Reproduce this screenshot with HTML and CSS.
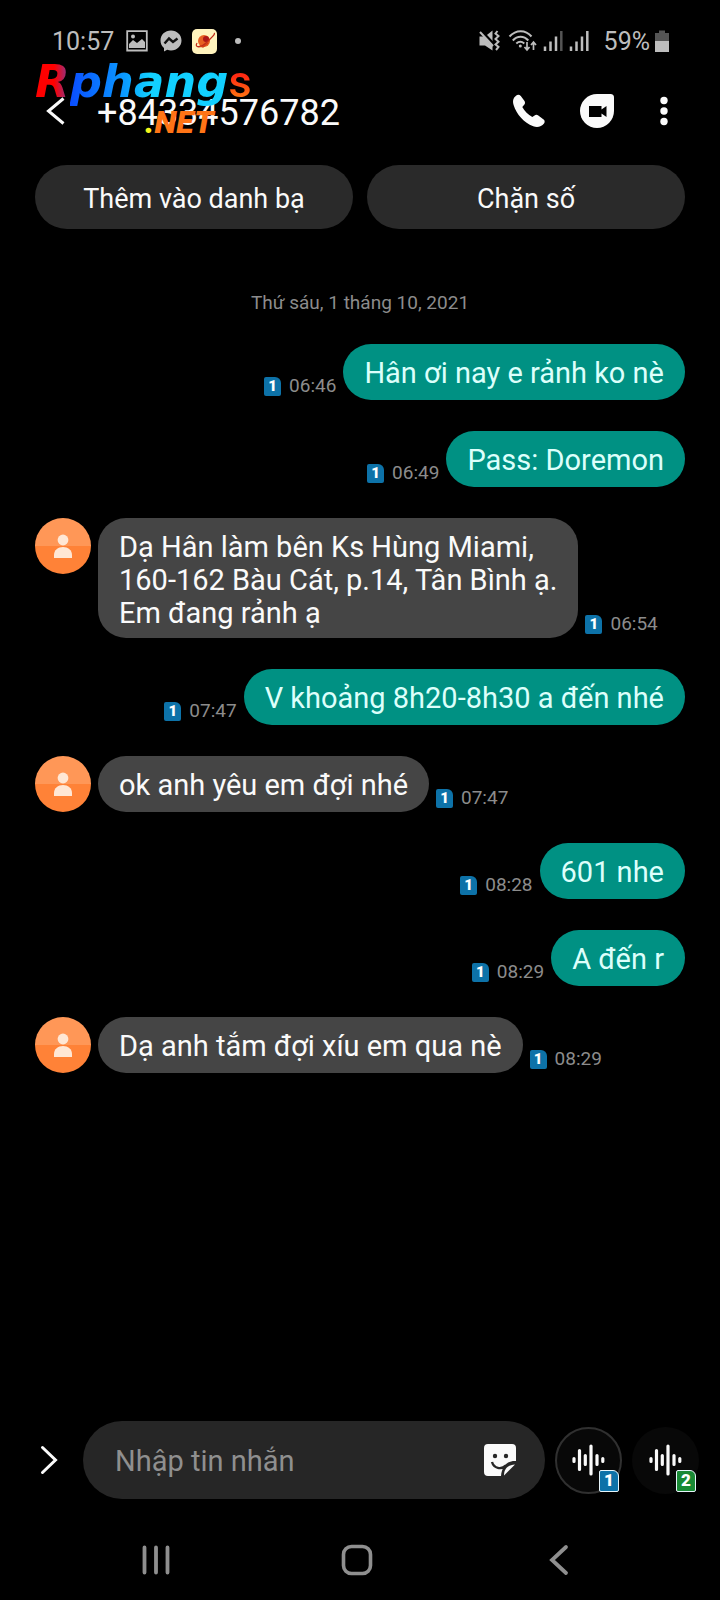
FILE: index.html
```html
<!DOCTYPE html>
<html lang="vi">
<head>
<meta charset="utf-8">
<meta name="viewport" content="width=device-width, initial-scale=1">
<title>+84334576782</title>
<link rel="stylesheet" href="styles.css">
</head>
<body>
<svg class="defs" aria-hidden="true">
  <symbol id="person" viewBox="0 0 56 56"><circle cx="28" cy="22" r="5.4"/><path d="M19 40v-3c0-5 4-8 9-8s9 3 9 8v3z"/></symbol>
  <symbol id="wave" viewBox="0 0 34 34"><path d="M2 15.500v3M7.500 7.500v19M13.300 12.500v9M19 3v28M25 12.500v9M30.800 15.500v3" fill="none" stroke="currentColor" stroke-width="3.200" stroke-linecap="round"/></symbol>
</svg>
<div class="screen">
  <div class="status">
    <span class="clock">10:57</span>
    <svg class="st-image" width="22" height="22" viewBox="0 0 22 22"><path d="M1.200 1.200h19.600v19.300H1.200z" fill="none" stroke="currentColor" stroke-width="1.800"/><circle cx="7" cy="6.500" r="2" fill="currentColor"/><path d="M3 18v-4l4-4 4 3 5-4 3 3v6z" fill="currentColor"/></svg>
    <svg class="st-messenger" width="22" height="22" viewBox="0 0 22 22"><path d="M11 .5C5 .5.500 4.800.500 10.500c0 3 1.300 5.600 3.500 7.500v3.500l3.200-1.700c1.200.4 2.500.6 3.800.6 6 0 10.500-4.300 10.500-9.900S17 .5 11 .5z" fill="currentColor"/><path d="M4.500 13.500 9 8.500l4 3.500 4.500-3.500" fill="none" stroke="#111" stroke-width="2.400"/></svg>
    <svg class="st-app" width="25" height="25" viewBox="0 0 25 25"><rect width="25" height="25" rx="5" fill="#fff3bd"/><circle cx="12" cy="12" r="6" fill="#e76022"/><circle cx="14" cy="10" r="3" fill="#ad1717"/><path d="M5 14c-3 5 4 5 9 0s10-9 8-10" fill="none" stroke="#c12c1a" stroke-width="1.300"/><path d="m8 17 3 1 5-4" fill="none" stroke="#d13c16" stroke-width="1.500"/></svg>
    <span class="st-dot"></span>
    <div class="status-right">
      <svg class="st-mute" width="22" height="22" viewBox="0 0 22 22"><path d="M.5 6.500H6L13.500.5v20L6 15.500H.5z" fill="currentColor"/><path d="M1 0l14 15" stroke="#000" stroke-width="3.500"/><path d="m1 2 13 14" stroke="currentColor" stroke-width="2"/><path d="m18.500 1-2 2.500 3 2.500-3 3 3 2.700-3 2.800 3 2.500-2.500 3" fill="none" stroke="currentColor" stroke-width="2"/></svg>
      <svg class="st-wifi" width="29" height="22" viewBox="0 0 29 22"><path d="M1.500 6.500c6.500-7 16-7 22 0M4.800 10.500c4.500-5 11-5 15.500 0M8.300 13.500c3-2.500 5-2.500 8 0" fill="none" stroke="currentColor" stroke-width="2"/><circle cx="12.300" cy="16" r="1.500" fill="currentColor"/><path d="M19 12v7.500M16.500 17l2.500 3 2.500-3M25.500 20v-7.500M23 15l2.500-3 2.500 3" fill="none" stroke="currentColor" stroke-width="1.700"/></svg>
      <svg class="st-signal" width="20" height="22" viewBox="0 0 20 22"><path d="M2 16.500V21M7.500 11.500V21M13 6.500V21" stroke="currentColor" stroke-width="2.500"/><path d="M18.300 1v20" stroke="#555" stroke-width="2.500"/></svg>
      <svg class="st-signal" width="20" height="22" viewBox="0 0 20 22"><path d="M2 16.500V21M7.500 11.500V21M13 6.500V21M18.300 1v20" stroke="currentColor" stroke-width="2.500"/></svg>
      <span class="percent">59%</span>
      <svg class="st-battery" width="16" height="23" viewBox="0 0 16 23"><path d="M5 .5h6V3h4v8H1V3h4z" fill="#555"/><path d="M1 11h14v11H1z" fill="currentColor"/></svg>
    </div>
  </div>

  <header class="header">
    <button class="icon-btn back" aria-label="Quay lại"><svg width="20" height="30" viewBox="0 0 20 30"><path d="M17.500 2.500 2.500 15l15 12.500" fill="none" stroke="currentColor" stroke-width="3"/></svg></button>
    <h1 class="number">+84334576782</h1>
    <div class="header-actions">
      <button class="icon-btn" aria-label="Gọi"><svg width="34" height="34" viewBox="0 0 34 34"><path d="M4 1.700C5.500.400 7.500.500 8.800 2l3.700 5c.8 1.300.7 2.800-.3 3.800l-1.900 2.100c2.300 4 5.800 7.700 10 10.100l2.300-1.600c1.100-.8 2.600-.8 3.700.1l5.300 4c1.300 1 1.400 2.700.4 4-2.500 3.200-6.500 4.400-10.800 2.800C12 28.500 4.500 20.500 1.600 11 .5 7 1 4 4 1.700z" fill="currentColor"/></svg></button>
      <button class="icon-btn" aria-label="Gọi video"><svg width="34" height="34" viewBox="0 0 34 34"><path d="M17 0h13.500Q34 0 34 3.500V17A17 17 0 1 1 17 0z" fill="currentColor"/><path d="M9 12h12.500v3.500L26.500 12v11l-5-3.500V23H9z" fill="#000"/></svg></button>
      <button class="icon-btn more" aria-label="Thêm"><svg width="8" height="30" viewBox="0 0 8 30"><circle cx="4" cy="4.500" r="3.700"/><circle cx="4" cy="15" r="3.700"/><circle cx="4" cy="25.500" r="3.700"/></svg></button>
    </div>
    <div class="brand"><span class="brand-r">R</span><span class="brand-main">phang</span><span class="brand-s">s</span><div class="brand-net"><span class="brand-dot">.</span>NET</div></div>
  </header>

  <div class="quick">
    <button class="quick-btn">Thêm vào danh bạ</button>
    <button class="quick-btn">Chặn số</button>
  </div>

  <main class="thread">
    <p class="date">Thứ sáu, 1 tháng 10, 2021</p>
    <div class="msg out"><p class="bubble">Hân ơi nay e rảnh ko nè</p><div class="meta"><span class="sim">1</span><time>06:46</time></div></div>
    <div class="msg out"><p class="bubble">Pass: Doremon</p><div class="meta"><span class="sim">1</span><time>06:49</time></div></div>
    <div class="msg in"><svg class="avatar"><use href="#person"/></svg><p class="bubble">Dạ Hân làm bên Ks Hùng Miami,<br>160-162 Bàu Cát, p.14, Tân Bình ạ.<br>Em đang rảnh ạ</p><div class="meta"><span class="sim">1</span><time>06:54</time></div></div>
    <div class="msg out"><p class="bubble">V khoảng 8h20-8h30 a đến nhé</p><div class="meta"><span class="sim">1</span><time>07:47</time></div></div>
    <div class="msg in"><svg class="avatar"><use href="#person"/></svg><p class="bubble">ok anh yêu em đợi nhé</p><div class="meta"><span class="sim">1</span><time>07:47</time></div></div>
    <div class="msg out"><p class="bubble">601 nhe</p><div class="meta"><span class="sim">1</span><time>08:28</time></div></div>
    <div class="msg out"><p class="bubble">A đến r</p><div class="meta"><span class="sim">1</span><time>08:29</time></div></div>
    <div class="msg in"><svg class="avatar"><use href="#person"/></svg><p class="bubble">Dạ anh tắm đợi xíu em qua nè</p><div class="meta"><span class="sim">1</span><time>08:29</time></div></div>
  </main>

  <form class="composer">
    <button type="button" class="icon-btn expand" aria-label="Mở rộng"><svg width="18" height="30" viewBox="0 0 18 30"><path d="M2.500 2.500 15.500 15l-13 12.500" fill="none" stroke="currentColor" stroke-width="3" stroke-linecap="round"/></svg></button>
    <div class="field">
      <input class="text" type="text" placeholder="Nhập tin nhắn" aria-label="Nhập tin nhắn">
      <button type="button" class="icon-btn" aria-label="Nhãn dán"><svg width="34" height="34" viewBox="0 0 34 34"><path d="M5 1h24q4 0 4 4v13c-9-.5-14 5-15 15H5q-4 0-4-4V5q0-4 4-4z" fill="currentColor"/><circle cx="12" cy="13" r="2.200" fill="#262626"/><circle cx="23" cy="13" r="2.200" fill="#262626"/><path d="M9 19c2 6.500 9 8 14 3.500" fill="none" stroke="#262626" stroke-width="2.400"/><path d="M21 32.500c0-7 4-10.500 11-11z" fill="currentColor"/></svg></button>
    </div>
    <button type="button" class="mic active" aria-label="Gửi bằng SIM 1"><svg width="34" height="34"><use href="#wave"/></svg><span class="sim sim-lg">1</span></button>
    <button type="button" class="mic" aria-label="Gửi bằng SIM 2"><svg width="34" height="34"><use href="#wave"/></svg><span class="sim sim-lg green">2</span></button>
  </form>

  <nav class="nav">
    <button class="icon-btn" aria-label="Gần đây"><svg width="32" height="32" viewBox="0 0 32 32"><path d="M4.500 3.500v25M16 3.500v25M27.500 3.500v25" fill="none" stroke="currentColor" stroke-width="3.800" stroke-linecap="round"/></svg></button>
    <button class="icon-btn" aria-label="Trang chính"><svg width="32" height="32" viewBox="0 0 32 32"><rect x="2.500" y="2.500" width="27" height="27" rx="8" fill="none" stroke="currentColor" stroke-width="3.600"/></svg></button>
    <button class="icon-btn" aria-label="Trở lại"><svg width="32" height="32" viewBox="0 0 32 32"><path d="M23 3 9 16l14 13" fill="none" stroke="currentColor" stroke-width="3.800" stroke-linecap="round"/></svg></button>
  </nav>
</div>
</body>
</html>
```
FILE: styles.css
```css
* { box-sizing: border-box; }
body { margin: 0; background: #000; color: #fafafa; font-family: Roboto, "Noto Sans", sans-serif; }
h1, p { margin: 0; font-weight: 400; }
button, input { font: inherit; color: inherit; border: 0; background: none; padding: 0; }
svg { display: block; flex: none; }
.defs { position: absolute; width: 0; height: 0; }
.screen { min-height: 100vh; display: flex; flex-direction: column; }
.icon-btn { display: flex; flex: none; }

.status { height: 80px; padding: 2px 50px 0 52px; display: flex; align-items: center; color: #bdbdbd; font-size: 25px; }
.st-image { margin-left: 12px; }
.st-messenger { margin-left: 12px; }
.st-app { margin-left: 10px; }
.st-dot { width: 6px; height: 6px; margin-left: 18px; border-radius: 50%; background: #bdbdbd; }
.status-right { margin-left: auto; display: flex; align-items: center; }
.st-wifi { margin-left: 7px; }
.st-signal { margin-left: 6px; }
.percent { margin-left: 15px; }
.st-battery { margin-left: 4px; }

.header { position: relative; height: 62px; padding: 0 52px 0 46px; display: flex; align-items: center; }
.number { margin-left: 31px; padding-top: 4px; font-size: 36px; line-height: 40px; }
.header-actions { margin-left: auto; display: flex; align-items: center; gap: 34px; }
.more { margin-left: 12px; fill: #fafafa; }
.brand { position: absolute; left: 35px; top: -26px; font: italic 700 45px/56px "DejaVu Sans", sans-serif; white-space: nowrap; }
.brand-r, .brand-main, .brand-s { -webkit-background-clip: text; background-clip: text; color: transparent; }
.brand-r { background-image: linear-gradient(90deg, #f00 55%, #7c3a9c); }
.brand-main { background-image: linear-gradient(90deg, #0a4dff, #0a9cff 35%, #12d0ff 50%); }
.brand-s { background-image: linear-gradient(#ff2a12 40%, #ff7412 80%); font-family: Roboto, sans-serif; font-style: normal; font-weight: 500; }
.brand-net { position: absolute; left: 110px; top: 52px; color: #ff7416; font: italic 900 32px/32px Roboto, sans-serif; }
.brand-dot { color: #f5f51c; }

.quick { margin-top: 23px; padding: 0 35px; display: grid; grid-template-columns: 1fr 1fr; gap: 14px; }
.quick-btn { height: 64px; padding-top: 3px; border-radius: 32px; background: #2a2a2a; font-size: 27px; }

.thread { flex: 1; padding: 60px 35px 24px; }
.date { margin-bottom: 28px; text-align: center; color: #8c8c8c; font-size: 19px; line-height: 27px; }
.msg { display: flex; align-items: flex-end; gap: 7px; margin-bottom: 31px; }
.out { flex-direction: row-reverse; }
.bubble { min-height: 56px; padding: 13px 21px 8px; border-radius: 28px; font-size: 29px; line-height: 33px; }
.out .bubble { background: #009183; color: #dcfffb; }
.in .bubble { background: #454545; }
.avatar { align-self: flex-start; width: 56px; height: 56px; border-radius: 50%; background: linear-gradient(#ff9757 50%, #ff8237 50%); fill: #ffe7d5; }
.meta { display: flex; align-items: center; gap: 8px; margin-bottom: 3px; color: #8c8c8c; font-size: 19px; line-height: 22px; }
.sim { display: flex; align-items: center; justify-content: center; width: 17px; height: 19px; border-radius: 2px 6px 2px 2px; background: #0d72a8; color: #fff; font-size: 15px; line-height: 19px; font-weight: 900; }

.composer { display: flex; align-items: center; padding: 0 21px 0 40px; }
.field { flex: 1; min-width: 0; height: 78px; margin-left: 25px; padding: 0 28px 0 32px; border-radius: 39px; background: #262626; display: flex; align-items: center; }
.text { flex: 1; min-width: 0; height: 60px; padding-top: 2px; font-size: 29px; outline: 0; }
.text::placeholder { color: #8f8f8f; opacity: 1; }
.mic { position: relative; display: flex; align-items: center; justify-content: center; flex: none; width: 67px; height: 67px; margin-left: 10px; border-radius: 50%; background: #080808; }
.active { border: 2px solid #303030; }
.sim-lg { position: absolute; right: 3px; bottom: 2px; width: 20px; height: 22px; border: 1px solid #e6f4fa; font-size: 17px; }
.active .sim-lg { right: 1px; bottom: 0; }
.green { background: #198a35; }
.nav { height: 101px; padding: 21px 60px 0 55px; display: grid; grid-template-columns: 1fr 1fr 1fr; justify-items: center; align-items: center; color: #8f8f8f; }
```
